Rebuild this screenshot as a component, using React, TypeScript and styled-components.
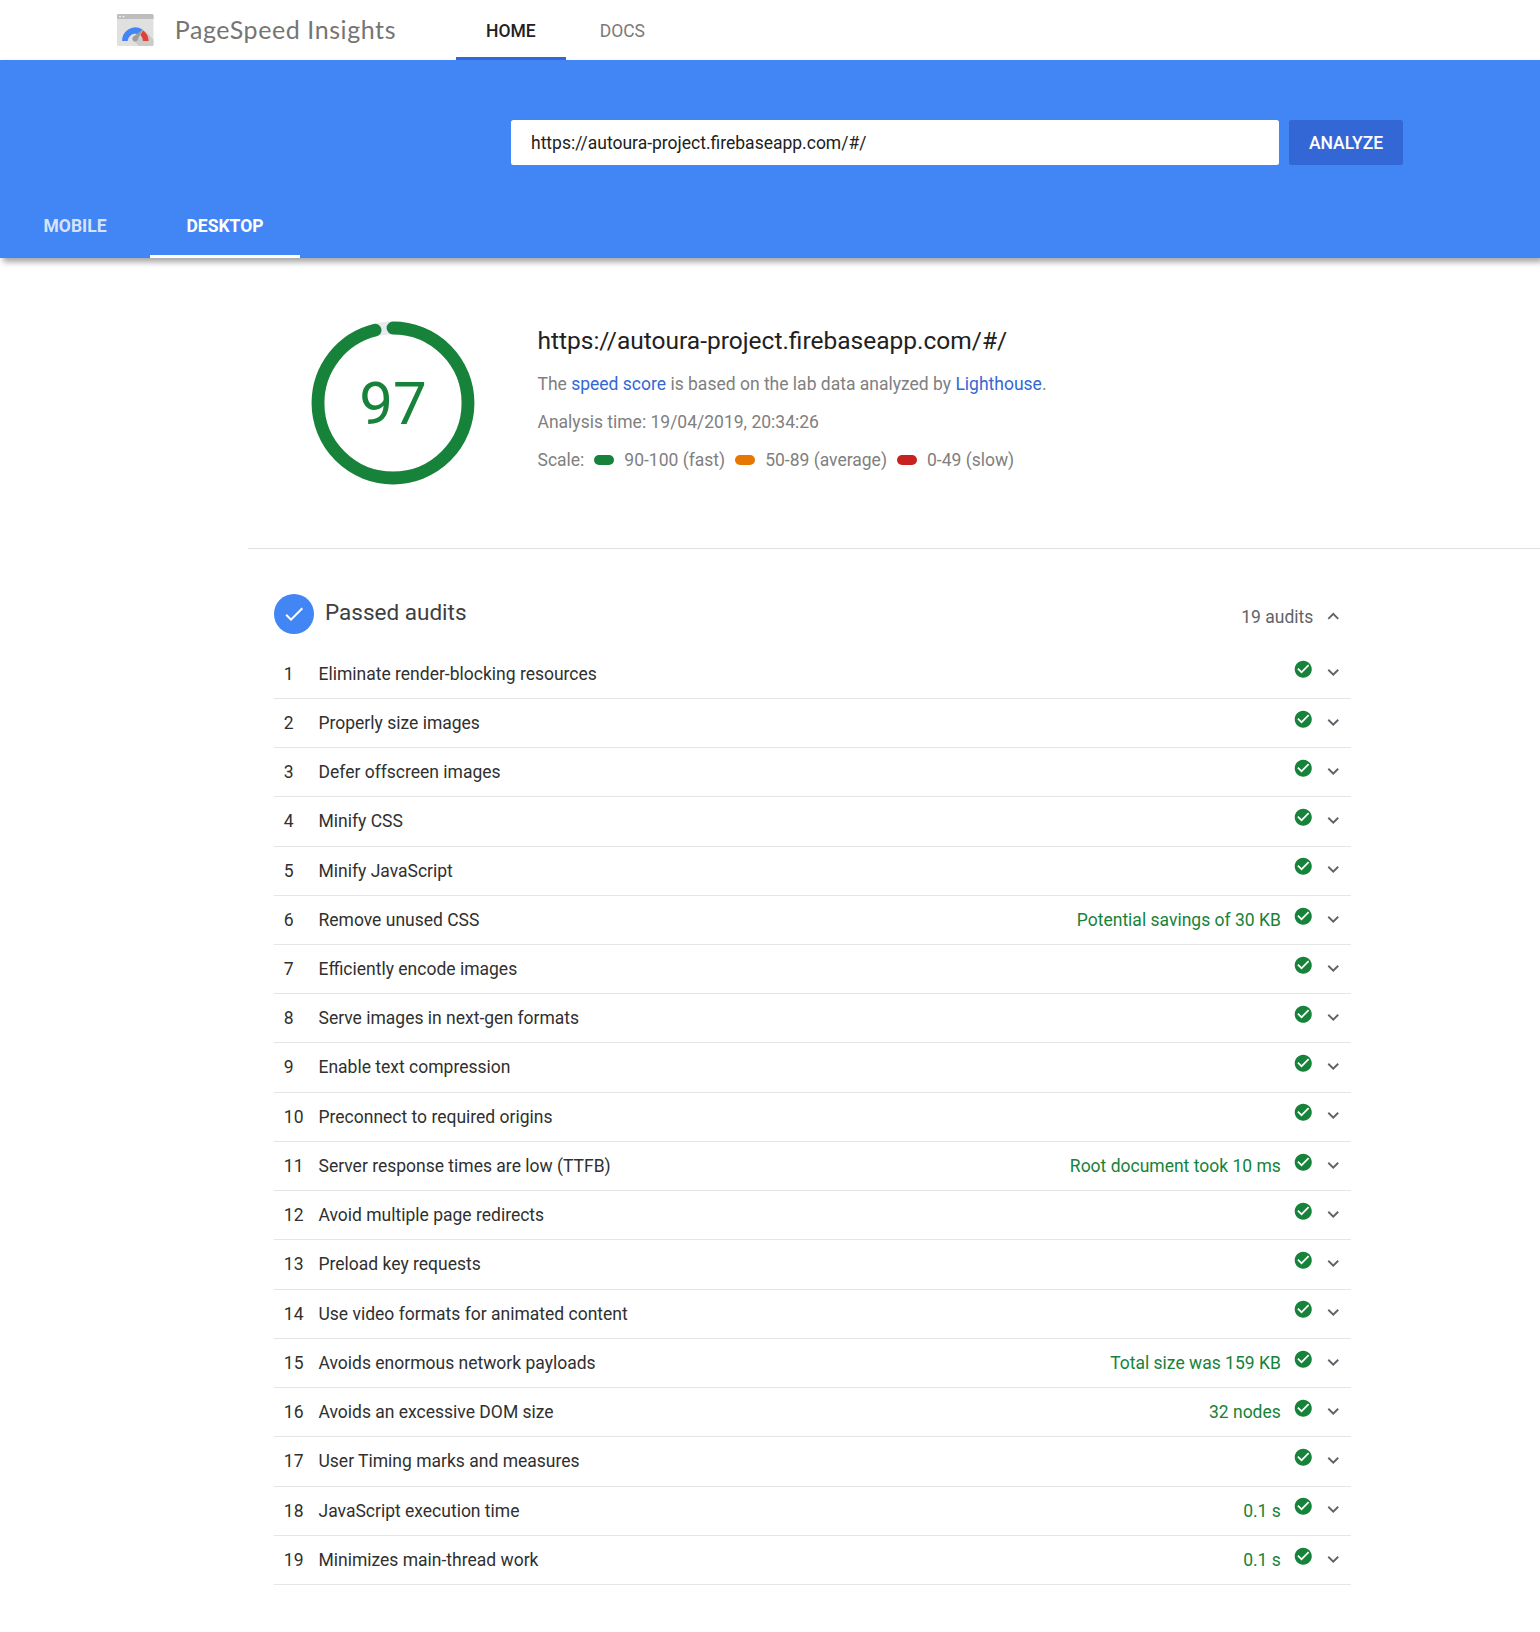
import React from "react";
import styled, { createGlobalStyle } from "styled-components";

const GlobalStyle = createGlobalStyle`
  * { box-sizing: border-box; }
  body {
    margin: 0;
    background: #fff;
    font-family: Roboto, "Liberation Sans", sans-serif;
    font-size: 17.5px;
    color: #212121;
  }
`;

const Page = styled.div`
  min-height: 1632px;
  overflow: hidden;
`;

const Header = styled.header`
  height: 60px;
  display: flex;
  padding-left: 116.7px;
`;

const Brand = styled.div`
  display: flex;
  align-items: center;
  gap: 21px;
  width: 339.3px;
`;

const BrandName = styled.span`
  padding-bottom: 2px;
  font-family: Lato, Roboto, sans-serif;
  font-size: 25px;
  letter-spacing: 0.58px;
  line-height: 58px;
  color: #757575;
  white-space: nowrap;
`;

const NavItem = styled.a<{ $active?: boolean }>`
  padding: 1px 30px 0;
  margin-right: 4px;
  height: 60px;
  line-height: 60px;
  font-weight: ${(p) => (p.$active ? 500 : 400)};
  color: ${(p) => (p.$active ? "#212121" : "#7a7a7a")};
  border-bottom: 3px solid ${(p) => (p.$active ? "#3367d6" : "transparent")};
`;

const Hero = styled.section`
  height: 198px;
  display: flex;
  flex-direction: column;
  justify-content: space-between;
  padding-top: 60px;
  background: #4285f4;
  box-shadow: 2.5px 3.5px 6px rgba(0, 0, 0, 0.36);
`;

const SearchForm = styled.form`
  display: flex;
  gap: 10px;
  margin-left: 511px;
`;

const UrlInput = styled.input`
  width: 768px;
  height: 45px;
  padding: 0 20px;
  border: 0;
  border-radius: 2.5px;
  font: inherit;
  color: #212121;
  background: #fff;
`;

const AnalyzeButton = styled.button`
  width: 114px;
  height: 45px;
  padding: 0;
  border: 0;
  border-radius: 2.5px;
  background: #3367d6;
  color: #fff;
  font: inherit;
  font-weight: 500;
`;

const DeviceTabs = styled.div`
  display: flex;
`;

const DeviceTab = styled.div<{ $active?: boolean }>`
  width: 150px;
  height: 60px;
  padding-top: 1px;
  line-height: 55px;
  text-align: center;
  font-weight: 700;
  color: ${(p) => (p.$active ? "#fff" : "rgba(255, 255, 255, 0.8)")};
  border-bottom: 3px solid ${(p) => (p.$active ? "#fff" : "transparent")};
`;

const Summary = styled.section`
  height: 291px;
  margin-left: 248px;
  padding: 63px 0 0 63px;
  display: flex;
  gap: 62.5px;
  border-bottom: 1px solid #e0e0e0;
`;

const Gauge = styled.div`
  width: 164px;
  height: 164px;
  display: grid;
  > * { grid-area: 1 / 1; }
`;

const GaugeScore = styled.span`
  align-self: center;
  text-align: center;
  padding-top: 2px;
  font-size: 60px;
  line-height: 1;
  color: #178239;
`;

const SummaryText = styled.div`
  padding-top: 2px;
`;

const SummaryUrl = styled.h1`
  margin: 0 0 7px;
  font-size: 24.5px;
  font-weight: 400;
  line-height: 35px;
`;

const SummaryLine = styled.div`
  display: flex;
  align-items: center;
  height: 38px;
  color: #808080;
  white-space: pre;
`;

const Link = styled.a`
  color: #3367d6;
`;

const Pill = styled.i<{ $color: string }>`
  width: 20px;
  height: 10px;
  margin: 0 10px;
  border-radius: 5px;
  background: ${(p) => p.$color};
`;

const Audits = styled.section`
  width: 1077px;
  margin-left: 274px;
`;

const AuditsHeader = styled.div`
  display: flex;
  height: 100.6px;
  padding: 45px 6.5px 0 0;
`;

const PassedBadge = styled.div`
  width: 40px;
  height: 40px;
  display: grid;
  place-items: center;
  border-radius: 50%;
  background: #4285f4;
`;

const AuditsTitle = styled.h2`
  flex: 1;
  margin: 0 0 0 11px;
  font-size: 22.5px;
  font-weight: 400;
  line-height: 36px;
  color: #3c4043;
`;

const AuditsCount = styled.span`
  padding-top: 3px;
  line-height: 40px;
  color: #5f6368;
`;

const Chevron = styled.svg<{ $raised?: boolean }>`
  width: 22.5px;
  height: 22.5px;
  flex: none;
  margin-top: ${(p) => (p.$raised ? "10.8px" : "0")};
  margin-left: 8.7px;
  fill: #5f6368;
`;

const AuditRow = styled.div`
  display: flex;
  align-items: center;
  height: 49.24px;
  padding: 0 6.5px 2.2px 9.8px;
  border-bottom: 1px solid #e5e5e5;
`;

const AuditNumber = styled.span`
  width: 34.7px;
  padding-top: 2px;
  color: #303030;
`;

const AuditName = styled.span`
  flex: 1;
  padding-top: 2px;
  color: #303030;
`;

const AuditValue = styled.span`
  padding-top: 2px;
  color: #178239;
`;

const PassIcon = styled.svg`
  width: 20.5px;
  height: 20.5px;
  margin: -6px 0 0 12px;
  fill: #178239;
`;

const audits: { name: string; value?: string }[] = [
  { name: "Eliminate render-blocking resources" },
  { name: "Properly size images" },
  { name: "Defer offscreen images" },
  { name: "Minify CSS" },
  { name: "Minify JavaScript" },
  { name: "Remove unused CSS", value: "Potential savings of 30 KB" },
  { name: "Efficiently encode images" },
  { name: "Serve images in next-gen formats" },
  { name: "Enable text compression" },
  { name: "Preconnect to required origins" },
  { name: "Server response times are low (TTFB)", value: "Root document took 10 ms" },
  { name: "Avoid multiple page redirects" },
  { name: "Preload key requests" },
  { name: "Use video formats for animated content" },
  { name: "Avoids enormous network payloads", value: "Total size was 159 KB" },
  { name: "Avoids an excessive DOM size", value: "32 nodes" },
  { name: "User Timing marks and measures" },
  { name: "JavaScript execution time", value: "0.1 s" },
  { name: "Minimizes main-thread work", value: "0.1 s" },
];

const Logo = () => (
  <svg width="37" height="32" viewBox="0 0 37 32">
    <rect width="36.5" height="32" rx="1.6" fill="#e0e0e0" />
    <path d="M0 5V1.6A1.6 1.6 0 0 1 1.6 0H34.9A1.6 1.6 0 0 1 36.5 1.6V5Z" fill="#bdbdbd" />
    <circle cx="3" cy="2.6" r="0.9" fill="#f5f5f5" />
    <circle cx="6.4" cy="2.6" r="0.9" fill="#f5f5f5" />
    <path d="M29 18L36.5 25.5V30.4A1.6 1.6 0 0 1 34.9 32H22L17 27L26 22Z" fill="#cbcbcb" />
    <path d="M5 27A13.3 13.9 0 0 1 25.5 15.6L21.5 20.4A7.6 8 0 0 0 10.7 27Z" fill="#4285f4" />
    <path d="M26.2 16.2A13.3 13.9 0 0 1 31.6 27H25.9A7.6 8 0 0 0 23.3 21Z" fill="#db4437" />
    <path d="M26.2 15.3L16.1 22.8A2.8 2.8 0 1 0 20.6 26Z" fill="#9e9e9e" />
  </svg>
);

const GAUGE_LENGTH = 2 * Math.PI * 75;

export default function App() {
  return (
    <Page>
      <GlobalStyle />
      <Header>
        <Brand>
          <Logo />
          <BrandName>PageSpeed Insights</BrandName>
        </Brand>
        <NavItem $active>HOME</NavItem>
        <NavItem>DOCS</NavItem>
      </Header>
      <Hero>
        <SearchForm>
          <UrlInput defaultValue="https://autoura-project.firebaseapp.com/#/" />
          <AnalyzeButton type="button">ANALYZE</AnalyzeButton>
        </SearchForm>
        <DeviceTabs>
          <DeviceTab>MOBILE</DeviceTab>
          <DeviceTab $active>DESKTOP</DeviceTab>
        </DeviceTabs>
      </Hero>
      <Summary>
        <Gauge>
          <svg width="164" height="164" viewBox="0 0 164 164" fill="none" strokeWidth="12.8">
            <circle cx="82" cy="82" r="75" stroke="#e8eaed" />
            <circle
              cx="82"
              cy="82"
              r="75"
              stroke="#178239"
              strokeLinecap="round"
              strokeDasharray={`${GAUGE_LENGTH * 0.96} ${GAUGE_LENGTH}`}
              transform="rotate(-90 82 82)"
            />
          </svg>
          <GaugeScore>97</GaugeScore>
        </Gauge>
        <SummaryText>
          <SummaryUrl>https://autoura-project.firebaseapp.com/#/</SummaryUrl>
          <SummaryLine>
            The <Link>speed score</Link> is based on the lab data analyzed by <Link>Lighthouse</Link>.
          </SummaryLine>
          <SummaryLine>Analysis time: 19/04/2019, 20:34:26</SummaryLine>
          <SummaryLine>
            Scale:<Pill $color="#178239" />90-100 (fast)<Pill $color="#e67700" />50-89 (average)
            <Pill $color="#c7221f" />0-49 (slow)
          </SummaryLine>
        </SummaryText>
      </Summary>
      <Audits>
        <AuditsHeader>
          <PassedBadge>
            <svg width="24" height="24" viewBox="0 0 24 24" fill="#fff">
              <path d="M9 16.17L4.83 12l-1.42 1.41L9 19 21 7l-1.41-1.41z" />
            </svg>
          </PassedBadge>
          <AuditsTitle>Passed audits</AuditsTitle>
          <AuditsCount>19 audits</AuditsCount>
          <Chevron $raised viewBox="0 0 24 24">
            <path d="M12 8l-6 6 1.41 1.41L12 10.83l4.59 4.58L18 14z" />
          </Chevron>
        </AuditsHeader>
        {audits.map((audit, index) => (
          <AuditRow key={audit.name}>
            <AuditNumber>{index + 1}</AuditNumber>
            <AuditName>{audit.name}</AuditName>
            {audit.value && <AuditValue>{audit.value}</AuditValue>}
            <PassIcon viewBox="0 0 24 24">
              <path d="M12 2C6.48 2 2 6.48 2 12s4.48 10 10 10 10-4.48 10-10S17.52 2 12 2zm-2 15l-5-5 1.41-1.41L10 14.17l7.59-7.59L19 8l-9 9z" />
            </PassIcon>
            <Chevron viewBox="0 0 24 24">
              <path d="M7.41 8.59L12 13.17l4.59-4.58L18 10l-6 6-6-6z" />
            </Chevron>
          </AuditRow>
        ))}
      </Audits>
    </Page>
  );
}
